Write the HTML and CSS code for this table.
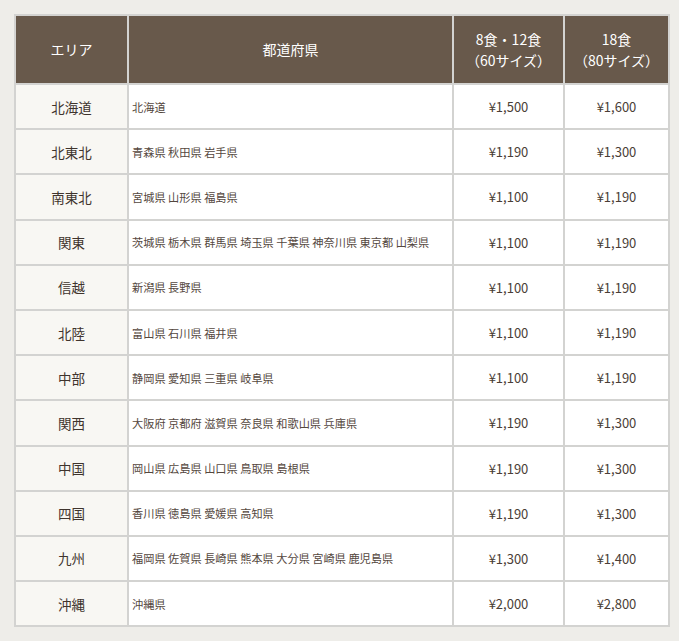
FILE: index.html
```html
<!DOCTYPE html>
<html lang="ja">
<head>
<meta charset="utf-8">
<link rel="stylesheet" href="styles.css">
</head>
<body>
<div class="wrap">
<table class="ship">
  <colgroup>
    <col class="c-area"><col class="c-pref"><col class="c-p1"><col class="c-p2">
  </colgroup>
  <thead>
    <tr><th>エリア</th><th>都道府県</th><th>8食・12食<br>（60サイズ）</th><th>18食<br>（80サイズ）</th></tr>
  </thead>
  <tbody>
    <tr><td class="area">北海道</td><td class="pref">北海道</td><td class="price">¥1,500</td><td class="price">¥1,600</td></tr>
    <tr><td class="area">北東北</td><td class="pref">青森県 秋田県 岩手県</td><td class="price">¥1,190</td><td class="price">¥1,300</td></tr>
    <tr><td class="area">南東北</td><td class="pref">宮城県 山形県 福島県</td><td class="price">¥1,100</td><td class="price">¥1,190</td></tr>
    <tr><td class="area">関東</td><td class="pref">茨城県 栃木県 群馬県 埼玉県 千葉県 神奈川県 東京都 山梨県</td><td class="price">¥1,100</td><td class="price">¥1,190</td></tr>
    <tr><td class="area">信越</td><td class="pref">新潟県 長野県</td><td class="price">¥1,100</td><td class="price">¥1,190</td></tr>
    <tr><td class="area">北陸</td><td class="pref">富山県 石川県 福井県</td><td class="price">¥1,100</td><td class="price">¥1,190</td></tr>
    <tr><td class="area">中部</td><td class="pref">静岡県 愛知県 三重県 岐阜県</td><td class="price">¥1,100</td><td class="price">¥1,190</td></tr>
    <tr><td class="area">関西</td><td class="pref">大阪府 京都府 滋賀県 奈良県 和歌山県 兵庫県</td><td class="price">¥1,190</td><td class="price">¥1,300</td></tr>
    <tr><td class="area">中国</td><td class="pref">岡山県 広島県 山口県 鳥取県 島根県</td><td class="price">¥1,190</td><td class="price">¥1,300</td></tr>
    <tr><td class="area">四国</td><td class="pref">香川県 徳島県 愛媛県 高知県</td><td class="price">¥1,190</td><td class="price">¥1,300</td></tr>
    <tr><td class="area">九州</td><td class="pref">福岡県 佐賀県 長崎県 熊本県 大分県 宮崎県 鹿児島県</td><td class="price">¥1,300</td><td class="price">¥1,400</td></tr>
    <tr><td class="area">沖縄</td><td class="pref">沖縄県</td><td class="price">¥2,000</td><td class="price">¥2,800</td></tr>
  </tbody>
</table>
</div>
</body>
</html>
```
FILE: styles.css
```css
html, body {
  margin: 0;
  padding: 0;
  background: #eeede9;
}
.wrap {
  padding: 14px 8px 12px 14px;
}
.ship {
  width: 656px;
  table-layout: fixed;
  border-collapse: separate;
  border-spacing: 2px;
  background: #d3d3d1;
  font-family: "Noto Sans CJK JP", "Noto Sans", sans-serif;
  color: #4a3e36;
}
.c-area { width: 111px; }
.c-pref { width: 323px; }
.c-p1 { width: 109px; }
.c-p2 { width: 103px; }
.ship th {
  background: #68594b;
  color: #ffffff;
  font-weight: 400;
  font-size: 14px;
  line-height: 21px;
  height: 67px;
  padding: 0;
  text-align: center;
  vertical-align: middle;
}
.ship td {
  height: 43.2px;
  padding: 0;
  vertical-align: middle;
  background: #ffffff;
}
.ship td.area {
  background: #f8f7f3;
  text-align: center;
  font-size: 13.5px;
  font-weight: 400;
  color: #3f342d;
}
.ship td.pref {
  font-size: 11.2px;
  padding-left: 3px;
  color: #54473e;
}
.ship td.price {
  text-align: center;
  font-size: 13px;
}
```
